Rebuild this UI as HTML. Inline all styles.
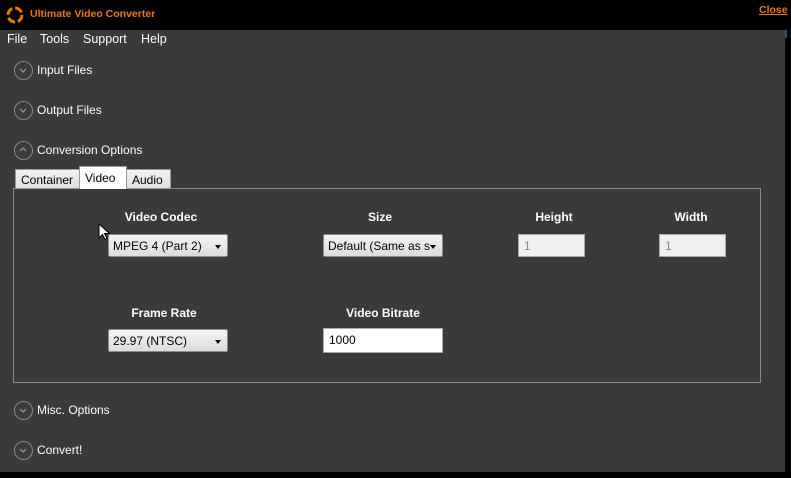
<!DOCTYPE html>
<html><head><style>
*{margin:0;padding:0;box-sizing:border-box}
body{width:791px;height:478px;background:#000;position:relative;overflow:hidden;font-family:"Liberation Sans",sans-serif;font-size:12px;color:#fff}
.a{position:absolute}
#main{left:0;top:30px;width:785px;height:442px;background:#3a3a3a}
.menu{top:32px;font-size:12.5px}
.sec{left:14px;font-size:12px}
.sec .c{position:absolute;left:0;top:0;width:19px;height:19px;border:1.5px solid #8a8a8a;border-radius:50%}
.sec .c svg{position:absolute;left:3px;top:3px}
.sec span{position:absolute;left:23px;top:2px;white-space:nowrap}
.lbl{font-size:12px;font-weight:bold;text-align:center;width:120px}
.dd{height:23px;border:1px solid #8c8c8c;border-radius:2px;background:linear-gradient(#f4f4f4,#dcdcdc);color:#000;font-size:12px;padding:4px 0 0 4px;white-space:nowrap;overflow:hidden}
.dd:after{content:"";position:absolute;right:6px;top:10px;border:3.5px solid transparent;border-top:4px solid #000}
.tb{height:23px;border:1px solid #aaa;background:#f0f0f0;color:#888;padding:4px 0 0 5px;font-size:12px}
.tab{height:20px;border:1px solid #999;background:linear-gradient(#f2f2f2,#dedede);color:#000;font-size:12px;padding:3px 0 0 5px}
</style></head><body>
<svg class="a" style="left:5px;top:5px" width="20" height="20" viewBox="0 0 20 20"><circle cx="10" cy="10" r="7" fill="none" stroke="#f07800" stroke-width="3" stroke-dasharray="8 3"/></svg>
<div class="a" style="left:30px;top:8px;color:#f07800;font-weight:bold;font-size:10.5px">Ultimate Video Converter</div>
<div class="a" style="left:759px;top:4px;color:#f07800;font-weight:bold;font-size:10.5px;text-decoration:underline">Close</div>
<div class="a" style="left:785px;top:30px;width:2px;height:8px;background:#1a4f9a"></div>
<div id="main" class="a"></div>
<div class="a menu" style="left:7px">File</div>
<div class="a menu" style="left:40px">Tools</div>
<div class="a menu" style="left:83px">Support</div>
<div class="a menu" style="left:141px">Help</div>
<div class="a sec" style="top:61px"><div class="c"><svg width="10" height="10"><path d="M2 4l3 3 3-3" stroke="#8a8a8a" stroke-width="1.5" fill="none"/></svg></div><span>Input Files</span></div>
<div class="a sec" style="top:101px"><div class="c"><svg width="10" height="10"><path d="M2 4l3 3 3-3" stroke="#8a8a8a" stroke-width="1.5" fill="none"/></svg></div><span>Output Files</span></div>
<div class="a sec" style="top:141px"><div class="c"><svg width="10" height="10"><path d="M2 6l3-3 3 3" stroke="#8a8a8a" stroke-width="1.5" fill="none"/></svg></div><span>Conversion Options</span></div>
<div class="a sec" style="top:401px"><div class="c"><svg width="10" height="10"><path d="M2 4l3 3 3-3" stroke="#8a8a8a" stroke-width="1.5" fill="none"/></svg></div><span>Misc. Options</span></div>
<div class="a sec" style="top:441px"><div class="c"><svg width="10" height="10"><path d="M2 4l3 3 3-3" stroke="#8a8a8a" stroke-width="1.5" fill="none"/></svg></div><span>Convert!</span></div>
<div class="a" style="left:13px;top:188px;width:748px;height:195px;border:1px solid #8a8a8a"></div>
<div class="a tab" style="left:15px;top:169px;width:65px">Container</div>
<div class="a tab" style="left:126px;top:169px;width:45px">Audio</div>
<div class="a tab" style="left:79px;top:166px;width:48px;height:23px;background:#fff;border-bottom:none;padding-top:4px">Video</div>
<div class="a lbl" style="left:101px;top:210px">Video Codec</div>
<div class="a lbl" style="left:320px;top:210px">Size</div>
<div class="a lbl" style="left:494px;top:210px">Height</div>
<div class="a lbl" style="left:631px;top:210px">Width</div>
<div class="a dd" style="left:108px;top:234px;width:120px">MPEG 4 (Part 2)</div>
<div class="a dd" style="left:323px;top:234px;width:120px;padding-right:18px">Default (Same as s</div>
<div class="a tb" style="left:518px;top:234px;width:67px">1</div>
<div class="a tb" style="left:659px;top:234px;width:67px">1</div>
<div class="a lbl" style="left:104px;top:306px">Frame Rate</div>
<div class="a lbl" style="left:323px;top:306px">Video Bitrate</div>
<div class="a dd" style="left:108px;top:329px;width:120px">29.97 (NTSC)</div>
<div class="a tb" style="left:323px;top:328px;width:120px;height:25px;background:#fff;color:#000">1000</div>
<svg class="a" style="left:98px;top:223px" width="12" height="18"><path d="M1 1v14l3.5-3.5 2.5 5 2-1-2.5-5h5z" fill="#fff" stroke="#000" stroke-width="1"/></svg>
</body></html>
